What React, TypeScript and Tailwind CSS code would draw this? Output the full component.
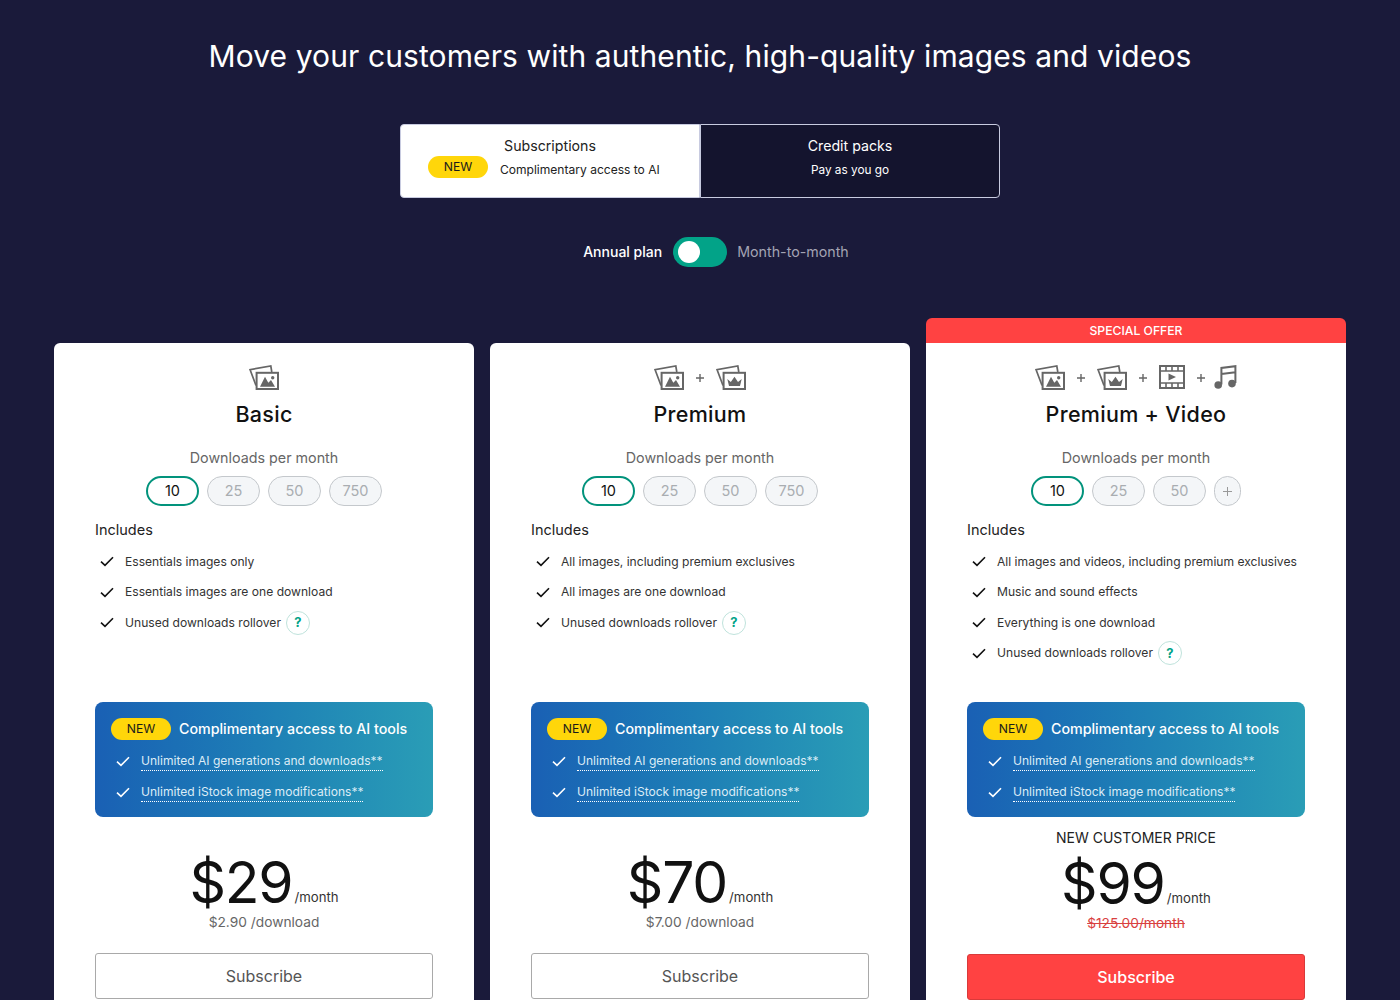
import React from "react";

const Photo = ({ inner }: { inner: React.ReactNode }) => (
  <svg width="30" height="25" viewBox="0 0 30 25" fill="none" className="shrink-0">
    <path d="M7 20.5 L1 4.6 L21.8 1 L22.8 7" stroke="#666" strokeWidth="1.7" fill="none" />
    <rect x="7.6" y="7.8" width="21.4" height="16.2" stroke="#666" strokeWidth="2" fill="#fff" />
    {inner}
  </svg>
);

const ImageIcon = () => (
  <Photo
    inner={
      <>
        <path d="M11 21.7 L16 11.7 L19.3 17.7 L22 15 L26 21.7 Z" fill="#666" />
        <circle cx="23.7" cy="12.7" r="1.7" fill="#666" />
      </>
    }
  />
);

const CrownIcon = () => (
  <Photo
    inner={
      <path d="M11.3 14 L14.8 17 L18.5 11.7 L22 17 L25.7 14 L24 21 L13 21 Z" fill="#666" />
    }
  />
);

const FilmIcon = () => (
  <svg width="26" height="24" viewBox="0 0 26 24" fill="none" className="shrink-0">
    <rect x="1" y="1" width="24" height="22" stroke="#666" strokeWidth="2" />
    <path d="M1 6 H25 M1 18 H25 M7 1 V6 M13 1 V6 M19 1 V6 M7 18 V23 M13 18 V23 M19 18 V23" stroke="#666" strokeWidth="1.6" />
    <path d="M9.5 8.5 L17 12 L9.5 15.5 Z" fill="#666" />
  </svg>
);

const MusicIcon = () => (
  <svg width="23" height="24" viewBox="0 0 23 24" fill="none" className="shrink-0 -ml-[3px]">
    <path d="M7.4 19.5 V3 L21.4 1.2 V18 M7.4 9 L21.4 7.2" stroke="#666" strokeWidth="2" />
    <circle cx="4.2" cy="20" r="3.8" fill="#666" />
    <circle cx="18" cy="18.6" r="3.8" fill="#666" />
  </svg>
);

const Plus = () => (
  <svg width="8" height="8" viewBox="0 0 8 8" className="shrink-0 mt-[1px]">
    <path d="M4 0 V8 M0 4 H8" stroke="#666" strokeWidth="1.4" />
  </svg>
);

const Check = ({ color = "#111" }: { color?: string }) => (
  <svg width="14" height="11" viewBox="0 0 14 11" fill="none" className="shrink-0">
    <path d="M1 5.6 L5 9.4 L13 1.2" stroke={color} strokeWidth="1.6" />
  </svg>
);

const NewPill = ({ className = "" }: { className?: string }) => (
  <span className={`flex items-center justify-center shrink-0 w-[60px] h-[22px] rounded-full bg-[#ffd60a] text-[#1a1a1a] text-[12.2px] ${className}`}>
    NEW
  </span>
);

const Help = () => (
  <span className="flex items-center justify-center w-6 h-6 rounded-full border border-[#bfe3dc] text-[#02a388] text-[13px] font-bold ml-[5px]">
    ?
  </span>
);

type Plan = {
  name: string;
  icons: React.ReactNode[];
  pills: string[];
  features: string[];
  price: string;
  per: string;
  special?: boolean;
};

const plans: Plan[] = [
  {
    name: "Basic",
    icons: [<ImageIcon key="a" />],
    pills: ["25", "50", "750"],
    features: ["Essentials images only", "Essentials images are one download"],
    price: "$29",
    per: "$2.90 /download",
  },
  {
    name: "Premium",
    icons: [<ImageIcon key="a" />, <CrownIcon key="b" />],
    pills: ["25", "50", "750"],
    features: ["All images, including premium exclusives", "All images are one download"],
    price: "$70",
    per: "$7.00 /download",
  },
  {
    name: "Premium + Video",
    icons: [<ImageIcon key="a" />, <CrownIcon key="b" />, <FilmIcon key="c" />, <MusicIcon key="d" />],
    pills: ["25", "50"],
    features: ["All images and videos, including premium exclusives", "Music and sound effects", "Everything is one download"],
    price: "$99",
    per: "$125.00/month",
    special: true,
  },
];

const Card = ({ plan }: { plan: Plan }) => (
  <div className="flex flex-col">
    {plan.special ? (
      <div className="h-[25px] pt-[1px] rounded-t-[6px] bg-[#ff4242] text-white text-[12.2px] font-medium flex items-center justify-center">
        SPECIAL OFFER
      </div>
    ) : (
      <div className="h-[25px]" />
    )}
    <div className={`bg-white px-[41px] pt-[20px] h-[700px] ${plan.special ? "" : "rounded-t-[6px]"}`}>
      <div className="flex items-center justify-center gap-[12px] h-[28px]">
        {plan.icons.map((icon, i) => (
          <React.Fragment key={i}>
            {i > 0 && <Plus />}
            {icon}
          </React.Fragment>
        ))}
      </div>
      <h2 className="text-center text-[21.5px] leading-[28px] font-medium text-[#111] tracking-[0.3px] mt-[9px]">{plan.name}</h2>
      <p className="text-center text-[14.3px] leading-5 text-[#666] mt-[20px]">Downloads per month</p>
      <div className="flex justify-center gap-2 mt-2">
        <span className="flex items-center justify-center w-[53px] h-[30px] rounded-full border-2 border-[#02937c] text-[#111] text-[14.5px]">10</span>
        {plan.pills.map((p) => (
          <span key={p} className="flex items-center justify-center w-[53px] h-[30px] rounded-full border border-[#c4c8cc] bg-[#f4f6f8] text-[#a9adb1] text-[14.5px]">
            {p}
          </span>
        ))}
        {plan.special && (
          <span className="flex items-center justify-center w-[27px] h-[30px] rounded-full border border-[#c4c8cc] bg-[#f4f6f8]">
            <svg width="11" height="11" viewBox="0 0 11 11"><path d="M5.5 1 V10 M1 5.5 H10" stroke="#999" strokeWidth="1" /></svg>
          </span>
        )}
      </div>
      <p className="text-[14.5px] leading-5 text-[#222] mt-[14px]">Includes</p>
      <ul className="h-[155.4px] mt-[6.6px] flex flex-col">
        {plan.features.map((f) => (
          <li key={f} className="flex items-center h-[30.5px] pl-[5px] gap-[11px] text-[12.1px] text-[#333] whitespace-nowrap">
            <Check />
            {f}
          </li>
        ))}
        <li className="flex items-center h-[30.5px] pl-[5px] gap-[11px] text-[12.1px] text-[#333] whitespace-nowrap">
          <Check />
          <span className="flex items-center">Unused downloads rollover<Help /></span>
        </li>
      </ul>
      <div className="h-[115px] rounded-[8px] bg-gradient-to-r from-[#1a60b4] to-[#2a9db6] pl-4 pr-[17px] pt-[16px]">
        <div className="flex items-center gap-2">
          <NewPill />
          <span className="text-white text-[14.25px] font-medium">Complimentary access to AI tools</span>
        </div>
        <div className="flex items-center gap-[11px] pl-[5px] mt-[10px] h-[23px] text-[12.05px] text-[#dcecf6]">
          <Check color="#fff" />
          <span className="border-b border-dotted border-white">Unlimited AI generations and downloads**</span>
        </div>
        <div className="flex items-center gap-[11px] pl-[5px] mt-2 h-[23px] text-[12.05px] text-[#dcecf6]">
          <Check color="#fff" />
          <span className="border-b border-dotted border-white">Unlimited iStock image modifications**</span>
        </div>
      </div>
      <div className={`h-[136px] flex flex-col items-center ${plan.special ? "pt-[11px]" : "pt-[37px]"}`}>
        {plan.special && <p className="text-[14px] leading-5 text-[#222]">NEW CUSTOMER PRICE</p>}
        <div className={`flex items-end h-[58px] ${plan.special ? "mt-[7px]" : ""}`}>
          <span className="text-[57px] leading-[58px] text-[#111] tracking-[-1.2px]">{plan.price}</span>
          <span className="text-[13.2px] text-[#333] ml-[2px] mb-[4px]">/month</span>
        </div>
        {plan.special ? (
          <p className="text-[13.75px] leading-[14px] mt-[3px] text-[#d9413f] line-through">{plan.per}</p>
        ) : (
          <p className="text-[13.75px] leading-[14px] mt-[3px] text-[#666]">{plan.per}</p>
        )}
      </div>
      {plan.special ? (
        <button className="w-full h-[46px] rounded-[3px] bg-[#ff4242] border border-[#d93a3a] text-white text-base font-medium mt-[1px]">Subscribe</button>
      ) : (
        <button className="w-full h-[46px] rounded-[3px] bg-white border border-[#a9a9a9] text-[#555] text-base">Subscribe</button>
      )}
    </div>
  </div>
);

export default function App() {
  return (
    <div className="h-[1000px] overflow-hidden bg-[#1a1a3a] font-['Inter','Noto_Sans',sans-serif]">
      <h1 className="pt-[37px] text-center text-[30px] leading-[38px] text-white tracking-[0.1px]">
        Move your customers with authentic, high-quality images and videos
      </h1>
      <div className="flex w-[600px] h-[74px] mx-auto mt-[49px]">
        <div className="w-[300px] rounded-l-[4px] bg-white border border-[#c8cbe0] flex flex-col items-center pt-[11px]">
          <span className="text-[14.2px] leading-5 text-[#222]">Subscriptions</span>
          <div className="flex items-start gap-3 self-start pl-[27px]">
            <NewPill />
            <span className="text-[12.05px] leading-5 mt-[4px] text-[#222]">Complimentary access to AI</span>
          </div>
        </div>
        <div className="w-[300px] rounded-r-[4px] bg-[#14142e] border border-[#c8cbe0] flex flex-col items-center pt-[11px]">
          <span className="text-[14.2px] leading-5 text-white">Credit packs</span>
          <span className="text-[11.8px] leading-5 text-white mt-[4px]">Pay as you go</span>
        </div>
      </div>
      <div className="flex items-center justify-center mt-[39px] h-[30px] pl-[32px]">
        <span className="text-sm text-white font-medium">Annual plan</span>
        <span className="flex items-center w-[54px] h-[30px] rounded-full bg-[#02a388] pl-[5px] ml-[11px]">
          <span className="w-[22px] h-[22px] rounded-full bg-white" />
        </span>
        <span className="text-[14.25px] text-[#a3a3b3] ml-[10px]">Month-to-month</span>
      </div>
      <div className="grid grid-cols-3 gap-4 w-[1292px] mx-auto mt-[51px]">
        {plans.map((p) => (
          <Card key={p.name} plan={p} />
        ))}
      </div>
    </div>
  );
}
